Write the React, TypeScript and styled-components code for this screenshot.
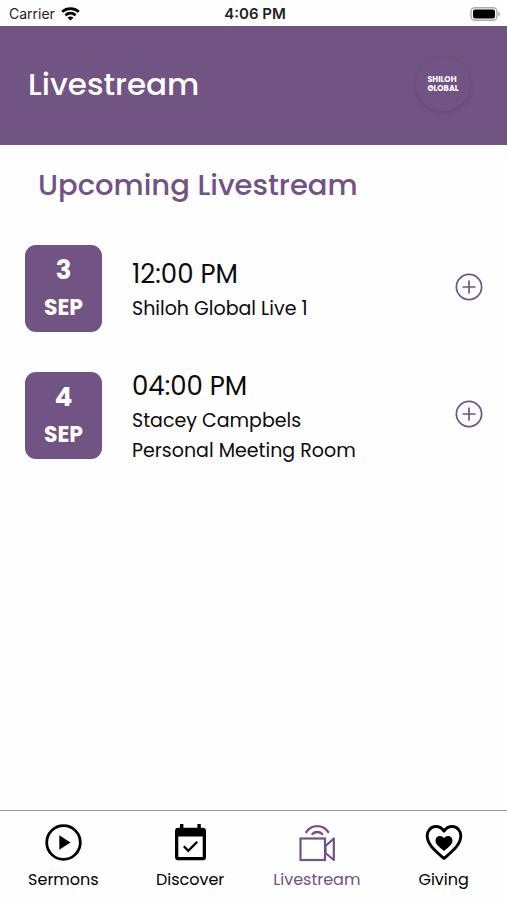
import React from "react";
import styled, { createGlobalStyle } from "styled-components";

const purple = "#715384";

const GlobalStyle = createGlobalStyle`
  *, *::before, *::after { box-sizing: border-box; }
  body {
    margin: 0;
    background: #fefefe;
    color: #0b0b0b;
    font-family: Poppins, Inter, "Liberation Sans", sans-serif;
  }
  button { font: inherit; }
`;

const Screen = styled.div`
  display: flex;
  flex-direction: column;
  min-height: 100vh;
`;

const StatusBar = styled.div`
  display: grid;
  grid-template-columns: 1fr auto 1fr;
  align-items: center;
  height: 26px;
  padding: 2px 6px 0 9px;
  font-family: Inter, "Liberation Sans", sans-serif;
  font-size: 14px;
  line-height: 20px;
  color: #222;
`;

const Carrier = styled.div`
  display: flex;
  align-items: center;
  gap: 6px;
`;

const Clock = styled.time`
  font-size: 15px;
  font-weight: 600;
`;

const Battery = styled.svg`
  justify-self: end;
`;

const Header = styled.header`
  display: flex;
  align-items: center;
  justify-content: space-between;
  height: 119px;
  padding: 0 37px 3px 28px;
  background: ${purple};
  color: #fff;
`;

const PageTitle = styled.h1`
  margin: 0;
  font-size: 31px;
  font-weight: 500;
  line-height: 40px;
`;

const Brand = styled.button`
  display: flex;
  align-items: center;
  justify-content: center;
  width: 54px;
  height: 54px;
  padding: 0;
  border: 0;
  border-radius: 50%;
  background: ${purple};
  box-shadow: 0 2px 4px rgba(60, 36, 84, 0.2);
  color: #fff;
  font-size: 8px;
  font-weight: 700;
  line-height: 9px;
  text-align: left;
`;

const Main = styled.main`
  flex: 1;
  padding: 20px 24px 20px 25px;
`;

const SectionTitle = styled.h2`
  margin: 0 0 34px;
  padding-left: 13px;
  font-size: 29px;
  font-weight: 500;
  line-height: 40px;
  color: ${purple};
`;

const EventList = styled.ul`
  display: flex;
  flex-direction: column;
  gap: 28px;
  margin: 0;
  padding: 0;
  list-style: none;
`;

const EventRow = styled.li`
  display: flex;
  align-items: center;
  height: 99px;
`;

const DateTile = styled.div`
  display: flex;
  flex-direction: column;
  flex: none;
  width: 77px;
  height: 87px;
  padding: 7px 0;
  border-radius: 11px;
  background: ${purple};
  color: #fff;
  font-weight: 700;
  text-align: center;
`;

const Day = styled.span`
  font-size: 26px;
  line-height: 37px;
`;

const Month = styled.span`
  font-size: 22px;
  line-height: 37px;
`;

const Details = styled.div`
  flex: 1;
  padding: 2px 0 0 30px;
`;

const Time = styled.div`
  font-size: 26px;
  line-height: 39px;
`;

const Name = styled.div`
  font-size: 19px;
  line-height: 30px;
  white-space: pre-line;
`;

const AddButton = styled.button`
  display: flex;
  flex: none;
  padding: 0 0 3px;
  border: 0;
  background: none;
  color: ${purple};
  cursor: pointer;
`;

const TabBar = styled.nav`
  display: grid;
  grid-template-columns: repeat(4, 1fr);
  height: 90px;
  border-top: 1px solid #988ba6;
`;

const Tab = styled.a<{ $active?: boolean }>`
  display: flex;
  flex-direction: column;
  align-items: center;
  gap: 5px;
  padding-top: 12px;
  color: ${({ $active }) => ($active ? purple : "#000")};
  font-size: 16px;
  line-height: 24px;
  text-decoration: none;
`;

const Icon = ({ children }: { children: React.ReactNode }) => (
  <svg width="40" height="40" viewBox="0 0 40 40" fill="none" stroke="currentColor" aria-hidden="true">
    {children}
  </svg>
);

const events = [
  { day: "3", month: "SEP", time: "12:00 PM", name: "Shiloh Global Live 1" },
  { day: "4", month: "SEP", time: "04:00 PM", name: "Stacey Campbels\nPersonal Meeting Room" },
];

const tabs = [
  {
    label: "Sermons",
    icon: (
      <>
        <circle cx="20.5" cy="19.5" r="16.8" strokeWidth="2.8" />
        <path d="M16.3 12.3v14.4l11.2-7.2z" fill="currentColor" stroke="none" />
      </>
    ),
  },
  {
    label: "Discover",
    icon: (
      <>
        <path
          d="M10 1h3.4v3.8h14V1h3.4v3.8h1.8a3.4 3.4 0 0 1 3.4 3.4v25.7a3.4 3.4 0 0 1-3.4 3.4H8.4A3.4 3.4 0 0 1 5 33.9V8.2a3.4 3.4 0 0 1 3.4-3.4H10zM8.3 13.4v20.5h24.4V13.4z"
          fill="currentColor"
          fillRule="evenodd"
          stroke="none"
        />
        <path d="m13.8 23.3 4.5 4.6 8.9-9.2" strokeWidth="2.3" />
      </>
    ),
  },
  {
    label: "Livestream",
    active: true,
    icon: (
      <>
        <path d="M9.3 9C14.9 1.2 25.6 1.2 31.2 9" strokeWidth="2.4" strokeLinecap="round" />
        <path d="M15.4 11c2.6-2.7 7.2-2.7 9.8 0" strokeWidth="2.4" strokeLinecap="round" />
        <rect x="3.5" y="15.5" width="24.5" height="21.5" strokeWidth="2.2" />
        <path d="M28.5 23 36.8 15.5V37l-8.3-7z" strokeWidth="2.2" strokeLinejoin="round" />
      </>
    ),
  },
  {
    label: "Giving",
    icon: (
      <>
        <path
          d="M20 35.500C12 28.500 3.200 21.800 3.200 12.800 3.200 7.500 7 3.500 11.900 3.500c3.300 0 6.200 1.700 8.100 4.600 1.900-2.900 4.800-4.600 8.100-4.600 4.900 0 8.700 4 8.700 9.300 0 9-8.800 15.700-16.800 22.700z"
          strokeWidth="2.9"
          strokeLinejoin="round"
        />
        <path
          d="M20 28c-4-3.500-8.500-6.500-8.500-10.600 0-2.500 1.900-4.500 4.400-4.500 1.700 0 3.200.9 4.100 2.300.9-1.400 2.400-2.300 4.100-2.300 2.500 0 4.400 2 4.400 4.500C28.500 21.500 24 24.500 20 28z"
          fill="currentColor"
          stroke="none"
        />
      </>
    ),
  },
];

export default function App() {
  return (
    <>
      <GlobalStyle />
      <Screen>
        <StatusBar>
          <Carrier>
            Carrier
            <svg width="19" height="14" viewBox="0 0 19 14" fill="none" stroke="#000" strokeWidth="2.8" aria-label="Wi-Fi">
              <path d="M1.2 4.7c4.8-4.2 11.8-4.2 16.6 0" />
              <path d="M4.4 8.2c3-2.6 7.2-2.6 10.2 0" />
              <path d="M9.5 13.6 6.6 10.7c1.7-1.5 4.1-1.5 5.8 0z" fill="#000" stroke="none" />
            </svg>
          </Carrier>
          <Clock>4:06 PM</Clock>
          <Battery width="31" height="14" viewBox="0 0 31 14" aria-label="Battery full">
            <rect x="1" y="0.7" width="26" height="12.6" rx="3.8" fill="#fff" stroke="#aaa" strokeWidth="1.4" />
            <rect x="3" y="2.6" width="22" height="8.8" rx="2" fill="#000" />
            <path d="M28.4 4.8c2.2.7 2.2 3.7 0 4.4z" fill="#aaa" />
          </Battery>
        </StatusBar>
        <Header>
          <PageTitle>Livestream</PageTitle>
          <Brand type="button">
            SHILOH
            <br />
            GLOBAL
          </Brand>
        </Header>
        <Main>
          <SectionTitle>Upcoming Livestream</SectionTitle>
          <EventList>
            {events.map((event) => (
              <EventRow key={event.day}>
                <DateTile>
                  <Day>{event.day}</Day>
                  <Month>{event.month}</Month>
                </DateTile>
                <Details>
                  <Time>{event.time}</Time>
                  <Name>{event.name}</Name>
                </Details>
                <AddButton type="button" aria-label={`Add ${event.name}`}>
                  <svg width="28" height="28" viewBox="0 0 28 28" fill="none" stroke="currentColor" strokeWidth="1.7">
                    <circle cx="14" cy="14" r="12.6" />
                    <path d="M14 7.5v13M7.5 14h13" />
                  </svg>
                </AddButton>
              </EventRow>
            ))}
          </EventList>
        </Main>
        <TabBar aria-label="Main">
          {tabs.map((tab) => (
            <Tab
              key={tab.label}
              href={`#${tab.label.toLowerCase()}`}
              $active={tab.active}
              aria-current={tab.active ? "page" : undefined}
            >
              <Icon>{tab.icon}</Icon>
              {tab.label}
            </Tab>
          ))}
        </TabBar>
      </Screen>
    </>
  );
}
